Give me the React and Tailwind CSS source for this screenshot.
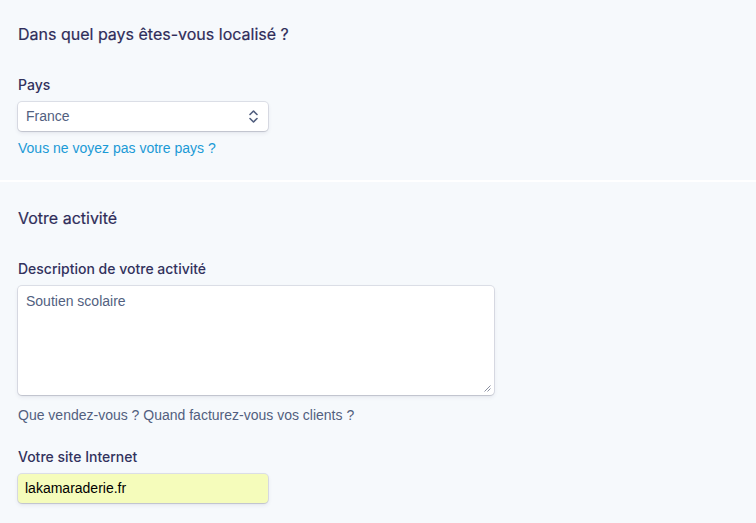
import React from "react";

const fieldShadow =
  "shadow-[0_0_0_1px_rgba(50,50,93,0.12),0_2px_4px_0_rgba(50,50,93,0.1),0_1px_1px_0_rgba(0,0,0,0.07)]";

function Label({ children }) {
  return (
    <div className="font-['Inter',sans-serif] text-[14px] font-medium text-[#32325d] leading-5">
      {children}
    </div>
  );
}

function Heading({ children }) {
  return (
    <h2 className="font-['Inter',sans-serif] text-[16px] font-normal text-[#2f2d5a] leading-6 [-webkit-text-stroke:0.2px_#2f2d5a]">
      {children}
    </h2>
  );
}

export default function App() {
  return (
    <div className="w-[756px] h-[523px] overflow-hidden bg-white font-['Liberation_Sans',sans-serif]">
      <section className="bg-[#f6f9fc] h-[180px] px-[18px] pt-[22px]">
        <Heading>Dans quel pays êtes-vous localisé ?</Heading>
        <div className="mt-[29px]">
          <Label>Pays</Label>
        </div>
        <div
          className={`mt-[7px] w-[250px] h-[29px] bg-white rounded-[4px] ${fieldShadow} flex items-center justify-between pl-[8px] pr-[10px]`}
        >
          <span className="text-[14px] text-[#525f7f]">France</span>
          <svg width="9" height="13" viewBox="0 0 9 13" fill="none" stroke="#525f7f" strokeWidth="1.6" strokeLinecap="round" strokeLinejoin="round">
            <path d="M1 4.5 L4.5 1 L8 4.5" />
            <path d="M1 8.5 L4.5 12 L8 8.5" />
          </svg>
        </div>
        <a className="block mt-[7px] text-[14px] text-[#1b9ad6] leading-5">Vous ne voyez pas votre pays ?</a>
      </section>

      <section className="mt-[2px] bg-[#f6f9fc] h-[341px] px-[18px] pt-[24px]">
        <Heading>Votre activité</Heading>
        <div className="mt-[29px]">
          <Label>Description de votre activité</Label>
        </div>
        <div
          className={`relative mt-[7px] w-[476px] h-[109px] bg-white rounded-[4px] ${fieldShadow} px-[8px] pt-[3px]`}
        >
          <span className="text-[14px] text-[#525f7f]">Soutien scolaire</span>
          <svg className="absolute right-[3px] bottom-[3px]" width="7" height="7" viewBox="0 0 7 7" stroke="#8a8fa0" strokeWidth="1">
            <path d="M0.5 6.5 L6.5 0.5" />
            <path d="M3.5 6.5 L6.5 3.5" />
          </svg>
        </div>
        <p className="mt-[10px] text-[14px] text-[#525f7f] leading-5">
          Que vendez-vous ? Quand facturez-vous vos clients ?
        </p>
        <div className="mt-[22px]">
          <Label>Votre site Internet</Label>
        </div>
        <div
          className={`mt-[7px] w-[250px] h-[29px] bg-[#f5fcbb] rounded-[4px] ${fieldShadow} flex items-center pl-[7px]`}
        >
          <span className="text-[14px] text-black">lakamaraderie.fr</span>
        </div>
      </section>
    </div>
  );
}
